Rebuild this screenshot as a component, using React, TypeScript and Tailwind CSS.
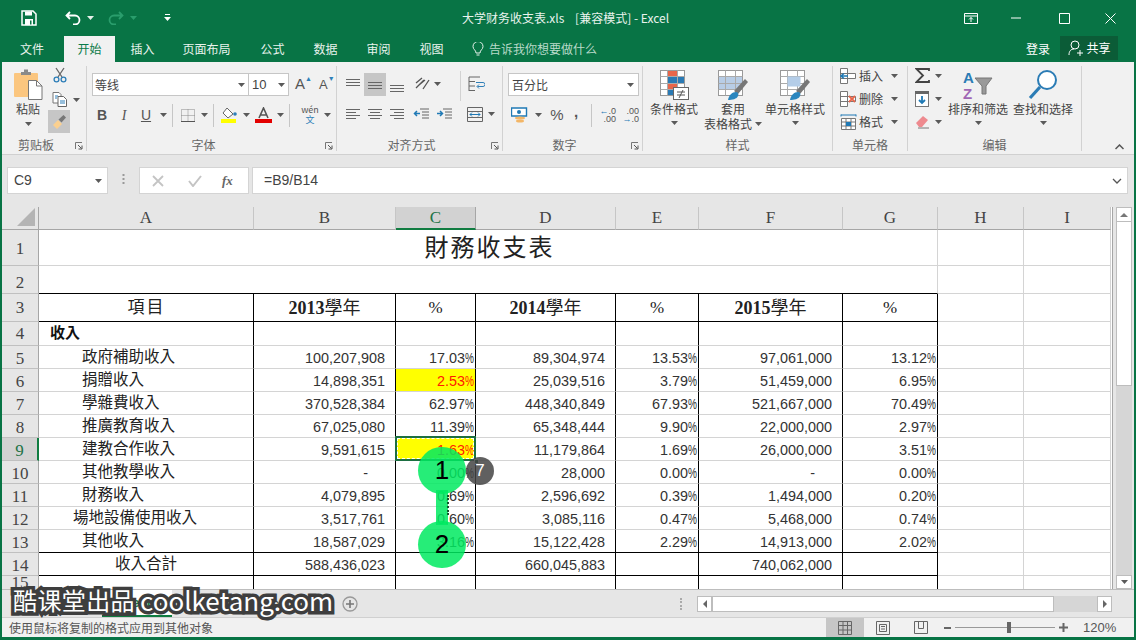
import type { ReactNode } from 'react';

const serif = "[font-family:'Liberation_Serif','Noto_Sans_CJK_TC',serif]";
const num = "[font-family:'Liberation_Sans',sans-serif]";

function Caret({ color = '#5a5a5a' }: { color?: string }) {
  return (
    <svg width="7" height="4" viewBox="0 0 7 4" className="shrink-0">
      <path d="M0 0h7L3.500 4z" fill={color} />
    </svg>
  );
}

function Lines({ rows, color = '#666' }: { rows: number[][]; color?: string }) {
  return (
    <svg width="16" height="14" viewBox="0 0 16 14">
      {rows.map((r, i) => (
        <path key={i} d={`M${r[0]} ${r[2]}.5H${r[1]}`} stroke={color} fill="none" />
      ))}
    </svg>
  );
}

function Launcher() {
  return (
    <svg width="8" height="8" viewBox="0 0 8 8" className="absolute bottom-[1px] right-[3px]">
      <path d="M0.500 7V0.500H7" fill="none" stroke="#777" />
      <path d="M3 3l3.500 3.500M3.500 7H7V3.500" fill="none" stroke="#555" />
    </svg>
  );
}

function Group({ width, label, launcher, children }: { width: string; label: string; launcher?: boolean; children: ReactNode }) {
  return (
    <div className={`relative flex h-full shrink-0 flex-col border-r border-[#d2d2d2] ${width}`}>
      <div className="h-[69px] shrink-0">{children}</div>
      <div className={`flex h-[17px] items-center justify-center pt-[3px] text-[12px] text-[#666] ${launcher ? 'pr-[16px]' : ''}`}>{label}</div>
      {launcher && <Launcher />}
    </div>
  );
}

function Sep() {
  return <div className="mx-[5px] h-[23px] w-px bg-[#c6c6c6]" />;
}

function Cut() {
  return (
    <svg width="16" height="16" viewBox="0 0 16 16">
      <path d="M4 1l6 9M12 1l-6 9" stroke="#666" strokeWidth="1.300" fill="none" />
      <circle cx="4.500" cy="12.500" r="2.400" fill="none" stroke="#2e7fb8" strokeWidth="1.300" />
      <circle cx="11.500" cy="12.500" r="2.400" fill="none" stroke="#2e7fb8" strokeWidth="1.300" />
    </svg>
  );
}

function Paste() {
  return (
    <svg width="30" height="32" viewBox="0 0 30 32">
      <rect x="1" y="4" width="24" height="24" rx="1" fill="#fbc67f" />
      <path d="M8 6V3h3V0.500h4V3h3v3z" fill="#8a8a8a" />
      <path d="M15.500 11.500h8l5.500 5.500v13.500H15.500z" fill="#fff" stroke="#777" />
      <path d="M23.500 11.500v5.500H29" fill="none" stroke="#777" />
    </svg>
  );
}

function Copy() {
  return (
    <svg width="16" height="15" viewBox="0 0 16 15">
      <path d="M1 .5h6l2 2V11H1z" fill="#fff" stroke="#777" />
      <path d="M6 4.500h5.500l3 3v7H6z" fill="#fff" stroke="#666" />
      <path d="M3 4h3M3 6h2M8 9h5M8 11h5" stroke="#2e7fb8" />
    </svg>
  );
}

function Painter() {
  return (
    <svg width="16" height="16" viewBox="0 0 16 16">
      <path d="M2 11l5-5 4 4-5 5z" fill="#fbd08f" />
      <path d="M7.500 5.500l3 3 4.500-5-2.500-2.500z" fill="#777" />
    </svg>
  );
}

function GridBase({ fill }: { fill?: ReactNode }) {
  return (
    <>
      <rect x="2.500" y="1.500" width="24" height="25" fill="#fff" stroke="#999" />
      {fill}
      <path d="M2.500 7.500h24M2.500 14.500h24M2.500 20.500h24M9.500 1.500v25M19.500 1.500v25" stroke="#aaa" fill="none" />
    </>
  );
}

function Conditional() {
  return (
    <svg width="32" height="32" viewBox="0 0 32 32">
      <GridBase
        fill={
          <>
            <rect x="10" y="2" width="9" height="6" fill="#e8664a" />
            <rect x="10" y="8" width="16" height="6" fill="#2a7ab4" />
            <rect x="10" y="15" width="10" height="5" fill="#e8664a" />
            <rect x="10" y="21" width="5" height="5" fill="#2a7ab4" />
          </>
        }
      />
      <rect x="15.500" y="18.500" width="15" height="12" fill="#fff" stroke="#666" />
      <path d="M19 23h8M19 26h8M25 21l-4 8" stroke="#555" fill="none" />
    </svg>
  );
}

function Brush() {
  return (
    <>
      <path d="M18 22L29 10l3 3-10 12z" fill="#777" />
      <path d="M12 31c1-5 4-8 8-8 2 0 3 2 2 4-1 3-6 4-10 4z" fill="#2a86be" />
    </>
  );
}

function TableFormat() {
  return (
    <svg width="34" height="32" viewBox="0 0 34 32">
      <GridBase fill={<rect x="3" y="8" width="23" height="12" fill="#b8cde6" />} />
      <Brush />
    </svg>
  );
}

function CellStyle() {
  return (
    <svg width="34" height="32" viewBox="0 0 34 32">
      <GridBase fill={<rect x="10" y="8" width="9" height="6" fill="#b8cde6" />} />
      <rect x="9.500" y="7.500" width="13" height="10" fill="#b4cde8" />
      <Brush />
    </svg>
  );
}

function BigButton({ icon, label, label2, width }: { icon: ReactNode; label: string; label2?: string; width: string }) {
  return (
    <div className={`flex shrink-0 flex-col items-center pt-[3px] text-[12px] leading-[15px] text-[#444] ${width}`}>
      <div className="flex h-[31px] items-center">{icon}</div>
      <div className="mt-[1px] whitespace-nowrap">{label}</div>
      {label2 ? (
        <div className="flex items-center gap-[3px] whitespace-nowrap">
          {label2}
          <Caret />
        </div>
      ) : (
        <div className="mt-[5px]">
          <Caret />
        </div>
      )}
    </div>
  );
}

function CellRow({ icon, label }: { icon: ReactNode; label: string }) {
  return (
    <div className="flex h-[23px] items-center text-[12px] text-[#444]">
      <div className="w-[19px] shrink-0">{icon}</div>
      <span>{label}</span>
      <div className="ml-[8px]">
        <Caret />
      </div>
    </div>
  );
}

function SmallGrid({ mark }: { mark: ReactNode }) {
  return (
    <svg width="17" height="16" viewBox="0 0 17 16">
      <path d="M.5.500h7v15h-7zM.5 5.500h7M.5 10.500h7M7.500 5.500h8v5h-8" fill="#fff" stroke="#777" />
      {mark}
    </svg>
  );
}

function TitleBar() {
  return (
    <div className="flex h-[36px] shrink-0 items-center bg-[#087445] text-white">
      <div className="ml-[19px] w-[44px]">
        <svg width="16" height="16" viewBox="0 0 16 16">
          <path d="M1 1h11l3 3v11H1z" fill="none" stroke="#fff" strokeWidth="1.500" />
          <path d="M4 1.500h7v4H4zM4 9h8v6H4z" fill="#fff" />
          <path d="M9 10.500h1.500v4H9z" fill="#087445" />
        </svg>
      </div>
      <svg width="16" height="14" viewBox="0 0 16 14">
        <path d="M5 1L1.500 4.500 5 8M2 4.500h8a4.500 4.500 0 0 1 0 9H8" fill="none" stroke="#fff" strokeWidth="1.800" />
      </svg>
      <div className="ml-[6px] w-[21px]">
        <Caret color="#e6f0ea" />
      </div>
      <svg width="16" height="14" viewBox="0 0 16 14">
        <path d="M11 1l3.500 3.500L11 8M14 4.500H6a4.500 4.500 0 0 0 0 9h2" fill="none" stroke="#2a9d6c" strokeWidth="1.800" />
      </svg>
      <div className="ml-[6px] w-[34px]">
        <Caret color="#2a9d6c" />
      </div>
      <svg width="7" height="8" viewBox="0 0 7 8">
        <path d="M1 .5h5" stroke="#fff" fill="none" />
        <path d="M0 3h7L3.500 7z" fill="#fff" />
      </svg>
      <div className="ml-[291px] w-[209px] whitespace-pre text-[12px] text-[#e8f3ed]">大学财务收支表.xls&nbsp;&nbsp;&nbsp;&nbsp;[兼容模式] - Excel</div>
      <div className="ml-[293px] flex items-center">
        <svg width="14" height="11" viewBox="0 0 14 11">
          <path d="M.5.500h13v10H.5zM.5 3h13M7 9V4.500M5 6.500l2-2 2 2" fill="none" stroke="#fff" />
        </svg>
        <svg width="12" height="2" viewBox="0 0 12 2" className="ml-[33px]">
          <path d="M0 1h10" stroke="#fff" />
        </svg>
        <svg width="11" height="11" viewBox="0 0 11 11" className="ml-[36px]">
          <path d="M.5.500h10v10H.5z" fill="none" stroke="#fff" />
        </svg>
        <svg width="11" height="11" viewBox="0 0 11 11" className="ml-[35px]">
          <path d="M.5.500l10 10M10.500.5l-10 10" fill="none" stroke="#fff" />
        </svg>
      </div>
    </div>
  );
}

function TabBar() {
  const tabs: [string, string][] = [
    ['插入', 'w-[55px]'],
    ['页面布局', 'w-[73px]'],
    ['公式', 'w-[59px]'],
    ['数据', 'w-[47px]'],
    ['审阅', 'w-[59px]'],
    ['视图', 'w-[47px]'],
  ];
  return (
    <div className="flex h-[26px] shrink-0 bg-[#087445] text-[12px] text-[#e8f3ed]">
      <div className="flex w-[60px] items-center justify-center">文件</div>
      <div className="ml-[2px] flex w-[51px] items-center justify-center bg-[#f1f1f1] text-[#0a7a49]">开始</div>
      {tabs.map(([t, w]) => (
        <div key={t} className={`flex items-center justify-center ${w}`}>
          {t}
        </div>
      ))}
      <div className="ml-[17px] flex items-center text-[#b9dac9]">
        <svg width="12" height="15" viewBox="0 0 12 15" className="mr-[5px]">
          <path d="M4 11c0-3-3-3.500-3-6.500a5 5 0 0 1 10 0C11 7.500 8 8 8 11zM4.500 13h3" fill="none" stroke="#e8f3ed" />
        </svg>
        告诉我你想要做什么
      </div>
      <div className="ml-[429px] flex w-[34px] items-center text-white">登录</div>
      <div className="flex h-[24px] w-[58px] items-center justify-center gap-[3px] bg-[#0b5c37] text-white">
        <svg width="16" height="16" viewBox="0 0 16 16">
          <circle cx="7" cy="5" r="4" fill="none" stroke="#fff" />
          <path d="M1 15c0-4 2-6 5-6M9 13h6M12 10v6" fill="none" stroke="#fff" />
        </svg>
        共享
      </div>
    </div>
  );
}

function Ribbon() {
  return (
    <div className="flex h-[93px] shrink-0 border-b border-[#d0d0d0] bg-[#f1f1f1] pb-[3px] pt-[4px] [font-family:'Noto_Sans_CJK_SC',sans-serif]">
      <Group width="w-[85px]" label="剪贴板" launcher>
        <div className="flex">
          <div className="flex w-[46px] flex-col items-center pl-[6px] pt-[3px] text-[12px] leading-[15px] text-[#444]">
            <Paste />
            <div>粘贴</div>
            <div className="mt-[6px]">
              <Caret />
            </div>
          </div>
          <div className="flex flex-col pt-[1px]">
            <div className="ml-[4px]">
              <Cut />
            </div>
            <div className="ml-[4px] mt-[9px] flex items-center gap-[5px]">
              <Copy />
              <Caret />
            </div>
            <div className="mt-[3px] flex h-[23px] w-[22px] items-center justify-center bg-[#c6c6c6]">
              <Painter />
            </div>
          </div>
        </div>
      </Group>

      <Group width="w-[250px]" label="字体" launcher>
        <div className="flex pl-[5px] pt-[7px]">
          <div className="flex h-[23px] w-[157px] items-center justify-between border border-[#c6c6c6] bg-white pl-[2px] pr-[3px] text-[12px] text-[#444]">
            等线
            <Caret />
          </div>
          <div className={`flex h-[23px] w-[40px] items-center justify-between border border-l-0 border-[#c6c6c6] bg-white pl-[3px] pr-[3px] text-[13px] text-[#444] ${num}`}>
            10
            <Caret />
          </div>
          <div className={`ml-[6px] flex items-center text-[15px] text-[#555] ${num}`}>
            A<span className="-mt-[10px] text-[7px] text-[#2e7fb8]">▲</span>
            <span className="ml-[7px] text-[13px]">A</span>
            <span className="-mt-[10px] text-[7px] text-[#2e7fb8]">▼</span>
          </div>
        </div>
        <div className="mt-[9px] flex h-[20px] items-center pl-[4px] text-[14px] text-[#555]">
          <div className={`w-[22px] text-center font-bold ${num}`}>B</div>
          <div className="w-[22px] text-center [font-family:'Liberation_Serif',serif] italic">I</div>
          <div className={`w-[22px] text-center underline ${num}`}>U</div>
          <div className="ml-[3px]">
            <Caret />
          </div>
          <Sep />
          <svg width="14" height="13" viewBox="0 0 14 13" className="ml-[3px]">
            <path d="M.5.500h13v12H.5zM.5 6.500h13M7 .5v12" fill="none" stroke="#888" strokeDasharray="1 1" />
            <path d="M0 12.500h14" stroke="#555" />
          </svg>
          <div className="ml-[6px]">
            <Caret />
          </div>
          <Sep />
          <svg width="18" height="16" viewBox="0 0 18 16" className="ml-[1px]">
            <path d="M7 1l6 6-5 4-5-5z" fill="#fff" stroke="#666" />
            <circle cx="15" cy="7" r="1.800" fill="#2e7fb8" />
            <rect x="1" y="12" width="15" height="4" fill="#ffff00" />
          </svg>
          <div className="ml-[5px]">
            <Caret />
          </div>
          <svg width="17" height="16" viewBox="0 0 17 16" className="ml-[5px]">
            <path d="M4 11L8.500 1 13 11M5.500 8h6" fill="none" stroke="#555" strokeWidth="1.600" />
            <rect x="0" y="12" width="17" height="4" fill="#e30000" />
          </svg>
          <div className="ml-[5px]">
            <Caret />
          </div>
          <Sep />
          <div className="ml-[3px] flex w-[24px] flex-col items-center text-[9px] leading-[10px] text-[#555]">
            <span>wén</span>
            <span className="text-[#2e7fb8]">文</span>
          </div>
          <div className="ml-[2px]">
            <Caret />
          </div>
        </div>
      </Group>

      <Group width="w-[166px]" label="对齐方式" launcher>
        <div className="flex h-[30px] pl-[5px] pt-[7px]">
          <div className="flex h-[23px] w-[22px] items-center justify-center">
            <Lines rows={[[1, 15, 1], [1, 15, 4], [1, 15, 7]]} />
          </div>
          <div className="flex h-[23px] w-[22px] items-center justify-center bg-[#c6c6c6]">
            <Lines rows={[[1, 15, 4], [1, 15, 7], [1, 15, 10]]} />
          </div>
          <div className="flex h-[23px] w-[22px] items-center justify-center">
            <Lines rows={[[1, 15, 7], [1, 15, 10], [1, 15, 13]]} />
          </div>
          <svg width="17" height="16" viewBox="0 0 17 16" className="ml-[6px] mt-[3px]">
            <path d="M2 7l6-5M5 9l6-5M2 12l8-8M9 13l6-9" fill="none" stroke="#555" strokeWidth="1.300" />
          </svg>
          <div className="ml-[3px] mt-[9px]">
            <Caret />
          </div>
          <div className="ml-[19px] mt-[-2px] h-[30px] w-px bg-[#d2d2d2]" />
          <svg width="17" height="16" viewBox="0 0 17 16" className="ml-[7px] mt-[3px]">
            <path d="M1 1h11M1 5.500h6M1 10h6M1 14.500h6M1 1v14" fill="none" stroke="#666" />
            <path d="M8 6.500h7a1.500 1.500 0 0 1 0 4H9.500M11 8.500l-2 2 2 2" fill="none" stroke="#2e7fb8" />
          </svg>
        </div>
        <div className="mt-[8px] flex h-[20px] items-center pl-[5px]">
          <div className="flex w-[22px] justify-center">
            <Lines rows={[[1, 15, 2], [1, 11, 5], [1, 15, 8], [1, 11, 11]]} />
          </div>
          <div className="flex w-[22px] justify-center">
            <Lines rows={[[1, 15, 2], [3, 13, 5], [1, 15, 8], [3, 13, 11]]} />
          </div>
          <div className="flex w-[22px] justify-center">
            <Lines rows={[[1, 15, 2], [5, 15, 5], [1, 15, 8], [5, 15, 11]]} />
          </div>
          <svg width="16" height="13" viewBox="0 0 16 13" className="ml-[5px]">
            <path d="M7 1h9M9 4h7M9 7h7M9 10h7" stroke="#666" fill="none" />
            <path d="M7 5.500H2M4 3L1.500 5.500 4 8" stroke="#1f79b5" strokeWidth="1.500" fill="none" />
          </svg>
          <svg width="16" height="13" viewBox="0 0 16 13" className="ml-[7px]">
            <path d="M7 1h9M9 4h7M9 7h7M9 10h7" stroke="#666" fill="none" />
            <path d="M1 5.500h5M4 3l2.500 2.500L4 8" stroke="#1f79b5" strokeWidth="1.500" fill="none" />
          </svg>
          <svg width="16" height="15" viewBox="0 0 16 15" className="ml-[15px]">
            <path d="M.5.500h15v14H.5zM.5 4.500h15M.5 10.500h15" fill="none" stroke="#666" />
            <path d="M3 7.500h10M5 5.500l-2 2 2 2M11 5.500l2 2-2 2" fill="none" stroke="#1f79b5" />
          </svg>
          <div className="ml-[5px]">
            <Caret />
          </div>
        </div>
      </Group>

      <Group width="w-[140px]" label="数字" launcher>
        <div className="pl-[5px] pt-[7px]">
          <div className="flex h-[23px] w-[131px] items-center justify-between border border-[#c6c6c6] bg-white pl-[3px] pr-[4px] text-[12px] text-[#444]">
            百分比
            <Caret />
          </div>
        </div>
        <div className="mt-[9px] flex h-[20px] items-center pl-[8px]">
          <svg width="17" height="16" viewBox="0 0 17 16">
            <path d="M.5 1h15v8H.5z" fill="#fff" stroke="#1f79b5" strokeWidth="1.400" />
            <circle cx="8" cy="5" r="2" fill="#1f79b5" />
            <ellipse cx="9" cy="11" rx="5" ry="1.500" fill="#f3b667" />
            <ellipse cx="9" cy="14" rx="4" ry="1.500" fill="#f3b667" />
          </svg>
          <div className="ml-[7px]">
            <Caret />
          </div>
          <div className={`ml-[8px] w-[14px] text-center text-[15px] text-[#555] ${num}`}>%</div>
          <div className={`ml-[8px] -mt-[5px] w-[8px] text-center text-[15px] font-bold text-[#555] ${num}`}>,</div>
          <div className="ml-[11px] h-[23px] w-px bg-[#c6c6c6]" />
          <div className={`ml-[7px] flex w-[17px] flex-col text-right text-[9px] leading-[8px] text-[#555] ${num}`}>
            <span>
              <span className="text-[#1f79b5]">←</span>.0
            </span>
            <span>.00</span>
          </div>
          <div className={`ml-[6px] flex w-[17px] flex-col text-right text-[9px] leading-[8px] text-[#555] ${num}`}>
            <span>.00</span>
            <span>
              <span className="text-[#1f79b5]">→</span>.0
            </span>
          </div>
        </div>
      </Group>

      <Group width="w-[190px]" label="样式">
        <div className="flex pl-[2px]">
          <BigButton icon={<Conditional />} label="条件格式" width="w-[58px]" />
          <BigButton icon={<TableFormat />} label="套用" label2="表格格式" width="w-[60px]" />
          <BigButton icon={<CellStyle />} label="单元格样式" width="w-[64px]" />
        </div>
      </Group>

      <Group width="w-[75px]" label="单元格">
        <div className="-mt-[2px] pl-[7px]">
          <CellRow
            label="插入"
            icon={<SmallGrid mark={<path d="M1 8h7M4 5.500L1 8l3 2.500" stroke="#1f79b5" strokeWidth="1.500" fill="none" />} />}
          />
          <CellRow
            label="删除"
            icon={<SmallGrid mark={<path d="M9 5l6 6M15 5l-6 6" stroke="#e8664a" strokeWidth="1.800" fill="none" />} />}
          />
          <CellRow
            label="格式"
            icon={
              <svg width="17" height="16" viewBox="0 0 17 16">
                <path d="M1 1h15M1 .5v2M16 .5v2" stroke="#1f79b5" />
                <path d="M1.500 4.500h14v11h-14zM1.500 8h14M1.500 12h14M6 4.500v11M11 4.500v11" fill="#fff" stroke="#777" />
                <rect x="6" y="8" width="5" height="4" fill="#1f79b5" />
              </svg>
            }
          />
        </div>
      </Group>

      <Group width="w-[174px]" label="编辑">
        <div className="flex">
          <div className="-mt-[2px] flex w-[38px] shrink-0 flex-col pl-[7px]">
            <div className="flex h-[23px] items-center gap-[5px]">
              <svg width="15" height="15" viewBox="0 0 15 15">
                <path d="M14 3V1H1.500L8 7.500 1.500 14H14v-2" fill="none" stroke="#444" strokeWidth="1.800" />
              </svg>
              <Caret />
            </div>
            <div className="flex h-[23px] items-center gap-[6px]">
              <svg width="14" height="16" viewBox="0 0 14 16">
                <rect x=".5" y=".5" width="13" height="15" fill="#fff" stroke="#777" />
                <rect x="0" y="0" width="14" height="3" fill="#666" />
                <path d="M7 5v7M4 9l3 3 3-3" fill="none" stroke="#1f79b5" strokeWidth="1.800" />
              </svg>
              <Caret />
            </div>
            <div className="flex h-[23px] items-center gap-[5px]">
              <svg width="15" height="14" viewBox="0 0 15 14">
                <path d="M1 8l7-7 5 4-6 7H4z" fill="#ee8a8f" />
                <path d="M3 13h11" stroke="#777" />
              </svg>
              <Caret />
            </div>
          </div>
          <BigButton
            width="w-[64px]"
            label="排序和筛选"
            icon={
              <svg width="32" height="32" viewBox="0 0 32 32">
                <text x="1" y="14" fontSize="15" fontWeight="700" fill="#2b7cb5" fontFamily="Liberation Sans">A</text>
                <text x="1" y="30" fontSize="15" fontWeight="700" fill="#a066b4" fontFamily="Liberation Sans">Z</text>
                <path d="M13 9h17l-6 8v8h-4v-8z" fill="#999" stroke="#777" />
              </svg>
            }
          />
          <BigButton
            width="w-[66px]"
            label="查找和选择"
            icon={
              <svg width="32" height="32" viewBox="0 0 32 32">
                <circle cx="20" cy="11" r="9" fill="#fff" stroke="#2b7cb5" strokeWidth="2" />
                <path d="M13 18L3 29" stroke="#2b7cb5" strokeWidth="3.200" />
              </svg>
            }
          />
        </div>
      </Group>

      <div className="flex flex-1 items-end justify-end pb-[1px] pr-[10px]">
        <svg width="9" height="6" viewBox="0 0 9 6">
          <path d="M.5 5l4-4 4 4" fill="none" stroke="#555" strokeWidth="1.500" />
        </svg>
      </div>
    </div>
  );
}

function FormulaBar() {
  return (
    <div className="flex h-[50px] shrink-0 bg-[#e6e6e6] pl-[5px] pr-[6px] pt-[12px] text-[#444] [font-family:'Liberation_Sans',sans-serif]">
      <div className="flex h-[27px] w-[101px] items-center justify-between border border-[#d4d4d4] bg-white pl-[6px] pr-[5px] text-[14px]">
        C9
        <Caret />
      </div>
      <div className="flex w-[31px] justify-center pt-[7px]">
        <svg width="3" height="12" viewBox="0 0 3 12">
          <path d="M1.500 0v12" stroke="#999" strokeWidth="2" strokeDasharray="2 2" />
        </svg>
      </div>
      <div className="flex h-[27px] w-[110px] items-center border border-[#d4d4d4] bg-white text-[#bbb]">
        <svg width="12" height="12" viewBox="0 0 12 12" className="ml-[12px]">
          <path d="M1 1l10 10M11 1L1 11" stroke="#c4c4c4" strokeWidth="1.800" fill="none" />
        </svg>
        <svg width="14" height="12" viewBox="0 0 14 12" className="ml-[24px]">
          <path d="M1 6l4 5 8-10" stroke="#c4c4c4" strokeWidth="2" fill="none" />
        </svg>
        <span className="ml-[20px] [font-family:'Liberation_Serif',serif] text-[13px] font-bold italic text-[#666]">fx</span>
      </div>
      <div className="ml-[3px] flex h-[27px] flex-1 items-center justify-between border border-[#d4d4d4] bg-white pl-[11px] pr-[5px] text-[14px]">
        =B9/B14
        <svg width="10" height="6" viewBox="0 0 10 6">
          <path d="M1 1l4 4 4-4" fill="none" stroke="#555" strokeWidth="1.300" />
        </svg>
      </div>
    </div>
  );
}

type RowData = { n: number; label: string; vals: string[]; hot?: boolean };

const rows: RowData[] = [
  { n: 5, label: '政府補助收入', vals: ['100,207,908', '17.03%', '89,304,974', '13.53%', '97,061,000', '13.12%'] },
  { n: 6, label: '捐贈收入', vals: ['14,898,351', '2.53%', '25,039,516', '3.79%', '51,459,000', '6.95%'], hot: true },
  { n: 7, label: '學雜費收入', vals: ['370,528,384', '62.97%', '448,340,849', '67.93%', '521,667,000', '70.49%'] },
  { n: 8, label: '推廣教育收入', vals: ['67,025,080', '11.39%', '65,348,444', '9.90%', '22,000,000', '2.97%'] },
  { n: 9, label: '建教合作收入', vals: ['9,591,615', '1.63%', '11,179,864', '1.69%', '26,000,000', '3.51%'], hot: true },
  { n: 10, label: '其他教學收入', vals: ['-', '0.00%', '28,000', '0.00%', '-', '0.00%'] },
  { n: 11, label: '財務收入', vals: ['4,079,895', '0.69%', '2,596,692', '0.39%', '1,494,000', '0.20%'] },
  { n: 12, label: '場地設備使用收入', vals: ['3,517,761', '0.60%', '3,085,116', '0.47%', '5,468,000', '0.74%'] },
  { n: 13, label: '其他收入', vals: ['18,587,029', '3.16%', '15,122,428', '2.29%', '14,913,000', '2.02%'] },
];

function RowHead({ n, active }: { n: number; active?: boolean }) {
  const pad = n === 1 ? 'pt-[3px]' : n === 2 ? 'pt-[6px]' : n <= 4 ? 'pt-[1px]' : n === 15 ? '' : 'pt-[3px]';
  return (
    <div
      className={`flex items-center justify-center border-b border-b-[#c0c0c0] text-[17px] ${serif} ${pad} ${
        active ? 'border-r-2 border-r-[#107c41] bg-[#d2d2d2] text-[#217346]' : 'border-r border-r-[#a6a6a6] bg-[#e6e6e6] text-[#444]'
      }`}
    >
      {n}
    </div>
  );
}

function ColHead({ c, active }: { c: string; active?: boolean }) {
  return (
    <div
      className={`flex items-center justify-center border-r text-[17px] ${serif} ${
        active
          ? 'border-b-2 border-b-[#107c41] border-r-[#a6a6a6] bg-[#d2d2d2] text-[#217346]'
          : 'border-b border-b-[#a6a6a6] border-r-[#c6c6c6] bg-[#e6e6e6] text-[#444]'
      }`}
    >
      {c}
    </div>
  );
}

function Percent({ v }: { v: string }) {
  if (!v) return null;
  return (
    <>
      {v.slice(0, -1)}
      <span className="inline-block w-[9px] origin-left scale-x-[0.7]">%</span>
    </>
  );
}

function Blank() {
  return <div className="border-b border-r border-[#d4d4d4]" />;
}

function DataCells({ vals, bottom, hot }: { vals: string[]; bottom: string; hot?: boolean }) {
  return (
    <>
      {vals.map((v, i) => {
        const pct = i % 2 === 1;
        const dash = v === '-';
        return (
          <div
            key={i}
            className={`flex items-center justify-end whitespace-nowrap border-r border-r-black pt-[3px] text-[14.400px] text-[#333] ${num} ${bottom} ${
              pct ? 'pr-[1px]' : dash ? 'pr-[27px]' : 'pr-[10px]'
            } ${pct && hot && i === 1 ? 'bg-[#ffff00] text-[#ff1a00]' : ''}`}
          >
            {pct ? <Percent v={v} /> : v}
          </div>
        );
      })}
    </>
  );
}

function YearHead({ t }: { t: string }) {
  if (t === '%') {
    return <div className={`flex items-center justify-center border-b border-r border-black pt-[1px] text-[17px] text-[#222] ${serif}`}>%</div>;
  }
  return (
    <div className={`flex items-center justify-center border-b border-r border-black pt-[1px] text-[18px] text-[#222] ${serif}`}>
      <span className="font-bold">{t.slice(0, 4)}</span>
      {t.slice(4)}
    </div>
  );
}

function Sheet() {
  const gray = 'border-b border-b-[#d4d4d4]';
  const black = 'border-b border-b-black';
  return (
    <div className="mt-[2px] grid w-[1111px] shrink-0 grid-cols-[37px_215px_142px_80px_140px_83px_144px_95px_86px_87px] grid-rows-[23px_36px_28px_28px_24px_repeat(10,23px)_14px] overflow-hidden border-r border-r-[#a6a6a6] bg-white">
      <div className="flex items-end justify-end border-b border-r border-[#a6a6a6] bg-[#e6e6e6] p-[3px]">
        <svg width="18" height="18" viewBox="0 0 18 18">
          <path d="M18 0v18H0z" fill="#b4b4b4" />
        </svg>
      </div>
      {['A', 'B', 'C', 'D', 'E', 'F', 'G', 'H', 'I'].map((c) => (
        <ColHead key={c} c={c} active={c === 'C'} />
      ))}

      <RowHead n={1} />
      <div className={`col-span-7 flex items-center justify-center pl-[3px] text-[24px] tracking-[2px] text-[#222] ${serif} border-b border-r border-[#d4d4d4]`}>
        財務收支表
      </div>
      <Blank />
      <Blank />

      <RowHead n={2} />
      <div className="col-span-7 border-b border-r border-b-black border-r-[#d4d4d4]" />
      <Blank />
      <Blank />

      <RowHead n={3} />
      <div className={`flex items-center justify-center border-r border-r-black pl-[1px] text-[17px] tracking-[2px] text-[#222] ${serif} ${black}`}>項目</div>
      {['2013學年', '%', '2014學年', '%', '2015學年', '%'].map((t, i) => (
        <YearHead key={i} t={t} />
      ))}
      <Blank />
      <Blank />

      <RowHead n={4} />
      <div className={`flex items-center border-r border-r-black pl-[11px] text-[15px] font-bold text-[#111] ${serif} ${gray}`}>收入</div>
      {[0, 1, 2, 3, 4, 5].map((i) => (
        <div key={i} className={`border-r border-r-black ${gray}`} />
      ))}
      <Blank />
      <Blank />

      {rows.map((r) => {
        const bottom = r.n === 13 ? black : gray;
        return (
          <div key={r.n} className="contents">
            <RowHead n={r.n} active={r.n === 9} />
            <div
              className={`flex items-center border-r border-r-black pb-[1px] text-[15.500px] text-[#222] ${serif} ${bottom} ${
                r.n === 12 ? 'pl-[34px]' : 'pl-[43px]'
              }`}
            >
              {r.label}
            </div>
            <DataCells vals={r.vals} bottom={bottom} hot={r.hot} />
            <Blank />
            <Blank />
          </div>
        );
      })}

      <RowHead n={14} />
      <div className={`flex items-center justify-center border-r border-r-black pb-[1px] text-[15.500px] text-[#222] ${serif} ${black}`}>收入合計</div>
      <DataCells vals={['588,436,023', '', '660,045,883', '', '740,062,000', '']} bottom={black} />
      <Blank />
      <Blank />

      <RowHead n={15} />
      {[0, 1, 2, 3, 4, 5, 6].map((i) => (
        <div key={i} className="border-r border-r-black" />
      ))}
      <div className="border-r border-[#d4d4d4]" />
      <div className="border-r border-[#d4d4d4]" />
    </div>
  );
}

function VScroll() {
  return (
    <div className="ml-[3px] mt-[2px] flex w-[16px] shrink-0 flex-col">
      <div className="flex h-[15px] shrink-0 items-center justify-center border border-[#bdbdbd] bg-white">
        <svg width="8" height="4" viewBox="0 0 8 4">
          <path d="M4 0l4 4H0z" fill="#777" />
        </svg>
      </div>
      <div className="h-[164px] shrink-0 border border-t-0 border-[#bdbdbd] bg-white" />
      <div className="flex-1 bg-[#d6d6d6]" />
      <div className="flex h-[14px] shrink-0 items-center justify-center border border-[#bdbdbd] bg-white">
        <Caret />
      </div>
    </div>
  );
}

function SheetBar() {
  return (
    <div className={`flex h-[28px] shrink-0 items-center border-t border-[#bdbdbd] bg-[#e6e6e6] text-[13px] text-[#444] ${num}`}>
      <div className="ml-[100px] flex h-[27px] w-[70px] items-center justify-center border-b-2 border-b-[#107c41] bg-white font-bold text-[#107c41]">Sheet1</div>
      <div className="flex w-[70px] items-center justify-center">Sheet2</div>
      <div className="flex w-[70px] items-center justify-center">Sheet3</div>
      <svg width="16" height="16" viewBox="0 0 16 16" className="ml-[30px]">
        <circle cx="8" cy="8" r="7" fill="none" stroke="#999" strokeWidth="1.300" />
        <path d="M4 8h8M8 4v8" stroke="#777" strokeWidth="1.600" />
      </svg>
      <div className="ml-[322px] mr-[15px] h-[12px] w-[2px] border-l-2 border-dotted border-[#aaa]" />
      <div className="mr-[22px] flex h-[16px] flex-1 bg-[#d6d6d6]">
        <div className="flex w-[15px] items-center justify-center border border-[#bdbdbd] bg-white">
          <svg width="4" height="8" viewBox="0 0 4 8">
            <path d="M4 0v8L0 4z" fill="#666" />
          </svg>
        </div>
        <div className="w-[342px] border border-[#bdbdbd] bg-white" />
        <div className="flex-1" />
        <div className="flex w-[15px] items-center justify-center border border-[#bdbdbd] bg-white">
          <svg width="4" height="8" viewBox="0 0 4 8">
            <path d="M0 0v8l4-4z" fill="#666" />
          </svg>
        </div>
      </div>
    </div>
  );
}

function StatusBar() {
  return (
    <div className="flex h-[20px] shrink-0 items-center border-t border-[#d0d0d0] bg-[#f1f1f1] pl-[7px] text-[12px] text-[#555] [font-family:'Noto_Sans_CJK_SC',sans-serif]">
      <span className="w-[817px]">使用鼠标将复制的格式应用到其他对象</span>
      <div className="flex h-[20px] w-[38px] items-center justify-center bg-[#c6c6c6]">
        <svg width="14" height="14" viewBox="0 0 14 14">
          <path d="M.5.500h13v13H.5zM.5 4.500h13M.5 9h13M5 .5v13M9.500.5v13" fill="none" stroke="#666" />
        </svg>
      </div>
      <svg width="14" height="14" viewBox="0 0 14 14" className="ml-[12px]">
        <path d="M.5.500h13v13H.5zM3.500 3.500h7v7h-7zM5 5.500h4M5 8h4" fill="none" stroke="#666" />
      </svg>
      <svg width="14" height="14" viewBox="0 0 14 14" className="ml-[24px]">
        <path d="M.5.500h13v12H.5zM4.500.5v7h5v-7" fill="none" stroke="#666" />
      </svg>
      <div className="ml-[16px] h-[2px] w-[7px] bg-[#666]" />
      <div className="relative ml-[4px] h-px w-[100px] bg-[#999]">
        <div className="absolute left-[52px] top-[-5px] h-[11px] w-[4px] bg-[#666]" />
      </div>
      <svg width="9" height="9" viewBox="0 0 9 9" className="ml-[4px]">
        <path d="M0 4.500h9M4.500 0v9" stroke="#666" strokeWidth="2" />
      </svg>
      <span className={`ml-[15px] text-[13px] ${num}`}>120%</span>
    </div>
  );
}

function Overlays() {
  return (
    <>
      <div className="absolute left-[393px] top-[436px] h-[25px] w-[81px] border-2 border-[#1d6f42]">
        <div className="h-full w-full border border-dashed border-white" />
      </div>
      <div className="absolute left-[472px] top-[459px] h-[5px] w-[5px] border border-white bg-[#0b5c37]" />
      <div className="absolute left-[434px] top-[490px] h-[35px] w-[12px] bg-[#00ea60]/85" />
      <div className="absolute left-[445px] top-[495px] h-[20px] border-l-2 border-dotted border-[#14532d]" />
      <div className={`absolute left-[416px] top-[447px] flex h-[47px] w-[48px] items-center justify-center rounded-full bg-[#00ea60]/85 text-[26px] text-black ${num}`}>1</div>
      <div className={`absolute left-[416px] top-[521px] flex h-[47px] w-[48px] items-center justify-center rounded-full bg-[#00ea60]/85 text-[26px] text-black ${num}`}>2</div>
      <div className={`absolute left-[464px] top-[457px] flex h-[28px] w-[28px] items-center justify-center rounded-full bg-[#444]/85 text-[17px] text-white ${num}`}>7</div>
      <div className="pointer-events-none absolute left-[11px] top-[584px] flex items-center text-[24px] leading-[32px] text-white [font-family:'Noto_Sans_CJK_SC',sans-serif] [-webkit-text-stroke:7px_#3e3e3e] [paint-order:stroke_fill]">
        <span className="tracking-[0.400px]">酷课堂出品</span>
        <span className="ml-[5px] text-[26px]">coolketang.com</span>
      </div>
    </>
  );
}

export default function App() {
  return (
    <div className="relative flex h-[640px] w-[1136px] flex-col overflow-hidden border-x-2 border-b-[3px] border-[#087445] bg-[#e6e6e6] [font-family:'Noto_Sans_CJK_SC',sans-serif]">
      <TitleBar />
      <TabBar />
      <Ribbon />
      <FormulaBar />
      <div className="flex h-[384px] shrink-0 overflow-hidden">
        <Sheet />
        <VScroll />
      </div>
      <SheetBar />
      <StatusBar />
      <Overlays />
    </div>
  );
}
